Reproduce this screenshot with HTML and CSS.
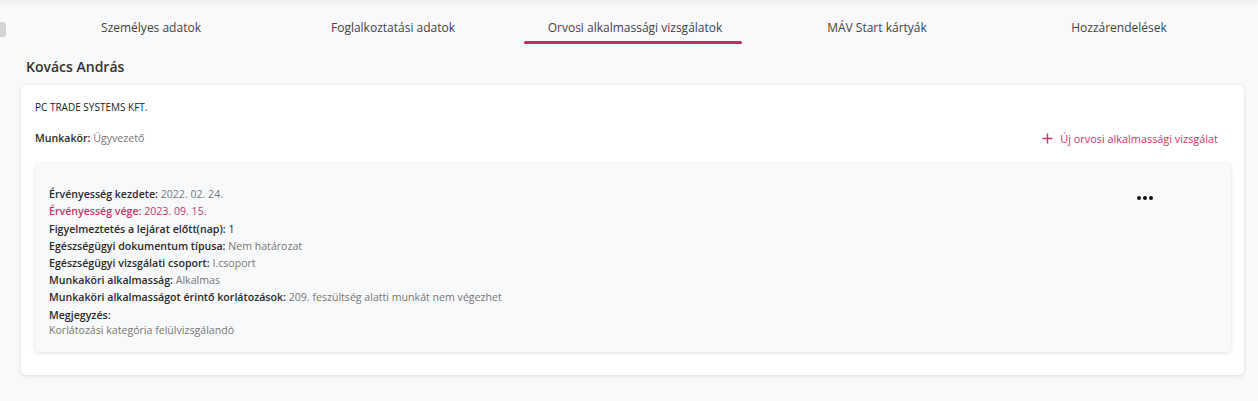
FILE: index.html
```html
<!DOCTYPE html>
<html lang="hu">
<head>
<meta charset="utf-8">
<link rel="stylesheet" href="styles.css">
</head>
<body>
<div class="topbar"></div>
<div class="side-toggle"></div>
<main class="page">
  <nav class="tabs">
    <div class="tab">Személyes adatok</div>
    <div class="tab">Foglalkoztatási adatok</div>
    <div class="tab active">Orvosi alkalmassági vizsgálatok</div>
    <div class="tab">MÁV Start kártyák</div>
    <div class="tab">Hozzárendelések</div>
  </nav>
  <h1 class="person">Kovács András</h1>
  <section class="card">
    <div class="company">PC TRADE SYSTEMS KFT.</div>
    <div class="job-row">
      <div class="field"><b>Munkakör:</b> Ügyvezető</div>
      <div class="add-btn"><svg width="11" height="11" viewBox="0 0 11 11"><path d="M5.5 0.5v10M0.5 5.5h10" stroke="#c4385f" stroke-width="1.4"/></svg><span>Új orvosi alkalmassági vizsgálat</span></div>
    </div>
    <div class="exam">
      <div class="exam-fields">
        <div class="field"><b>Érvényesség kezdete:</b> 2022. 02. 24.</div>
        <div class="field expired"><b>Érvényesség vége:</b> 2023. 09. 15.</div>
        <div class="field"><b>Figyelmeztetés a lejárat előtt(nap):</b> <span class="dark">1</span></div>
        <div class="field"><b>Egészségügyi dokumentum típusa:</b> Nem határozat</div>
        <div class="field"><b>Egészségügyi vizsgálati csoport:</b> I.csoport</div>
        <div class="field"><b>Munkaköri alkalmasság:</b> Alkalmas</div>
        <div class="field"><b>Munkaköri alkalmasságot érintő korlátozások:</b> 209. feszültség alatti munkát nem végezhet</div>
        <div class="field"><b>Megjegyzés:</b></div>
        <div class="field note">Korlátozási kategória felülvizsgálandó</div>
      </div>
      <div class="more"><i></i><i></i><i></i></div>
    </div>
  </section>
</main>
</body>
</html>
```
FILE: styles.css
```css
* { box-sizing: border-box; }
html, body { margin: 0; }
body {
  background: #f8f9fb;
  font-family: "Open Sans", "DejaVu Sans", sans-serif;
  color: #333;
  width: 1258px;
  height: 401px;
  overflow: hidden;
  position: relative;
}
.topbar {
  height: 3px;
  background: #f2f2f3;
  box-shadow: 0 1px 3px rgba(0,0,0,0.05);
}
.side-toggle {
  position: absolute;
  left: -3px;
  top: 22px;
  width: 9px;
  height: 15px;
  background: #d4d4d6;
  border-radius: 3px;
}
.page {
  padding: 0 14px 0 21px;
}
.tabs {
  display: grid;
  grid-template-columns: repeat(5, 1fr);
  margin: 0 0 0 9px;
  width: 1210px;
  padding-top: 14px;
}
.tab {
  text-align: center;
  font-size: 12px;
  color: #444;
  height: 27px;
  padding-top: 2px;
  position: relative;
}
.tab.active::after {
  content: "";
  position: absolute;
  left: 10px;
  right: 14px;
  bottom: 0;
  height: 3px;
  border-radius: 2px;
  background: #b8325f;
}
.person {
  margin: 13px 0 0 5px;
  font-size: 14px;
  font-weight: 600;
  color: #333;
  line-height: 19px;
}
.card {
  margin-top: 9px;
  background: #fff;
  border-radius: 5px;
  box-shadow: 0 1px 4px rgba(0,0,0,0.12);
  padding: 15px 13px 23px 14px;
}
.company {
  font-size: 10px;
  color: #222;
  line-height: 14px;
}
.job-row {
  display: flex;
  justify-content: space-between;
  align-items: center;
  margin-top: 16px;
  padding-right: 13px;
}
.field {
  font-size: 10.6px;
  line-height: 17.2px;
  color: #777;
  white-space: nowrap;
}
.field b {
  font-weight: 600;
  color: #2a2a2a;
}
.field .dark { color: #2a2a2a; }
.field.expired, .field.expired b { color: #c4385f; }
.field.note { line-height: 13px; }
.add-btn {
  display: flex;
  align-items: center;
  gap: 7px;
  font-size: 10.9px;
  color: #c4385f;
}
.exam {
  margin-top: 16px;
  background: #f8f9fb;
  border-radius: 5px;
  box-shadow: 0 1px 4px rgba(0,0,0,0.13);
  display: flex;
  justify-content: space-between;
  padding: 23px 78px 15px 14px;
}
.more {
  display: flex;
  gap: 2px;
  padding-top: 10px;
}
.more i {
  width: 4px;
  height: 4px;
  background: #111;
  border-radius: 50%;
}
```
